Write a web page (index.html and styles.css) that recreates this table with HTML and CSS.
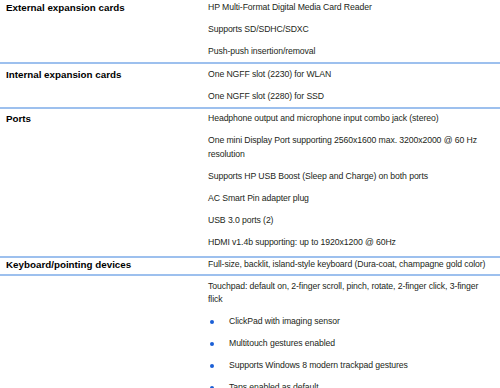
FILE: index.html
```html
<!DOCTYPE html>
<html lang="en">
<head>
  <meta charset="UTF-8" />
  <title>Specifications</title>
  <link rel="stylesheet" href="styles.css">
</head>
<body>
  <div class="spec">
    <div class="row row-first">
      <div class="label">External expansion cards</div>
      <div class="value">
        <p>HP Multi-Format Digital Media Card Reader</p>
        <p>Supports SD/SDHC/SDXC</p>
        <p>Push-push insertion/removal</p>
      </div>
    </div>
    <div class="row">
      <div class="label">Internal expansion cards</div>
      <div class="value">
        <p>One NGFF slot (2230) for WLAN</p>
        <p>One NGFF slot (2280) for SSD</p>
      </div>
    </div>
    <div class="row row-loose">
      <div class="label">Ports</div>
      <div class="value">
        <p>Headphone output and microphone input combo jack (stereo)</p>
        <p>One mini Display Port supporting 2560x1600 max. 3200x2000 @ 60 Hz resolution</p>
        <p>Supports HP USB Boost (Sleep and Charge) on both ports</p>
        <p>AC Smart Pin adapter plug</p>
        <p>USB 3.0 ports (2)</p>
        <p>HDMI v1.4b supporting: up to 1920x1200 @ 60Hz</p>
      </div>
    </div>
    <div class="row row-tight">
      <div class="label">Keyboard/pointing devices</div>
      <div class="value">
        <p>Full-size, backlit, island-style keyboard (Dura-coat, champagne gold color)</p>
      </div>
    </div>
    <div class="row row-open">
      <div class="label"></div>
      <div class="value">
        <p>Touchpad: default on, 2-finger scroll, pinch, rotate, 2-finger click, 3-finger flick</p>
        <ul class="bullets">
          <li>ClickPad with imaging sensor</li>
          <li>Multitouch gestures enabled</li>
          <li>Supports Windows 8 modern trackpad gestures</li>
          <li>Taps enabled as default</li>
        </ul>
      </div>
    </div>
  </div>
</body>
</html>
```

FILE: styles.css
```css
/* Page */
body {
  margin: 0;
  background: #fff;
  color: #231f20;
  font-family: "Liberation Sans", Arial, sans-serif;
  font-size: 8.7px;
  letter-spacing: -0.1px;
  line-height: 13.5px;
  overflow: hidden;
}
/* Spec table */
.spec {
  width: 500px;
}
.row {
  display: grid;
  grid-template-columns: 208px 1fr;
  padding: 3.5px 0;
  border-bottom: 2px solid #9dc0ee;
}
.row-first {
  padding-top: 1px;
}
.row-loose {
  padding-bottom: 7px;
}
.row-tight {
  padding: 0 0 2px;
}
.row-open {
  border-bottom: none;
  padding-top: 4px;
}
.label {
  padding-left: 6px;
  font-size: 9.8px;
  letter-spacing: 0;
  font-weight: bold;
  color: #000;
}
.value {
  padding-right: 11px;
}
.value p {
  margin: 0 0 8.5px;
}
.value p:last-child {
  margin-bottom: 0;
}
/* Bulleted list */
.bullets {
  list-style: none;
  margin: 8.5px 0 0;
  padding: 0;
}
.bullets li {
  display: flex;
  align-items: center;
  gap: 15px;
  padding-left: 2px;
  margin-bottom: 8.5px;
}
.bullets li::before {
  content: "";
  width: 4px;
  height: 4px;
  border-radius: 50%;
  background: #1b5fd6;
}
```
